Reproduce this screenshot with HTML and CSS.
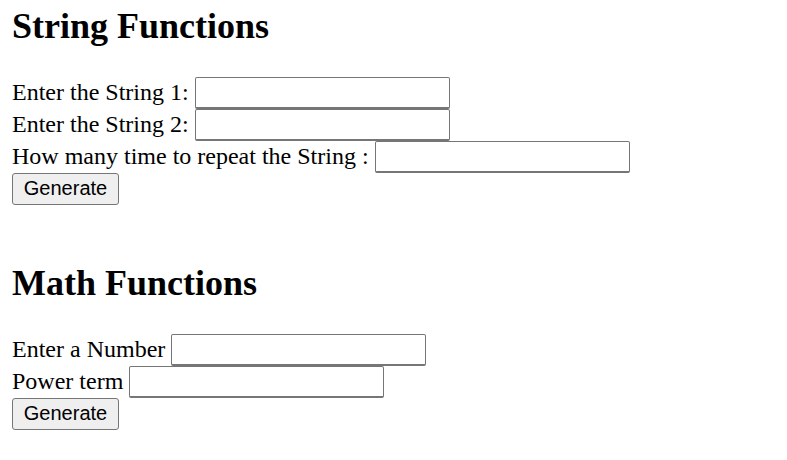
FILE: index.html
```html
<!DOCTYPE html>
<html>
<head>
<meta charset="utf-8">
<title>Functions</title>
<link rel="stylesheet" href="styles.css">
</head>
<body>
<div class="page">
  <h2 class="title first">String Functions</h2>
  <form class="form">
    Enter the String 1: <input class="field" type="text"><br>
    Enter the String 2: <input class="field" type="text"><br>
    How many time to repeat the String : <input class="field" type="text"><br>
    <button class="btn" type="button">Generate</button>
  </form>
  <br>
  <h2 class="title">Math Functions</h2>
  <form class="form">
    Enter a Number <input class="field" type="text"><br>
    Power term <input class="field" type="text"><br>
    <button class="btn" type="button">Generate</button>
  </form>
</div>
</body>
</html>
```
FILE: styles.css
```css
html, body {
  margin: 0;
  padding: 0;
  background: #ffffff;
}
.page {
  padding: 0 12px 12px;
  font-family: "Liberation Serif", "Times New Roman", serif;
  font-size: 24px;
  color: #000000;
}
.title {
  font-size: 36px;
  font-weight: bold;
  margin: 30px 0;
}
.title.first {
  margin-top: 5px;
}
.form {
  margin: 0;
}
.field {
  box-sizing: border-box;
  width: 255px;
  height: 32px;
  margin: 0;
  padding: 1px 3px;
  border: 1px solid #767676;
  border-bottom-width: 2px;
  border-radius: 2px;
  font-family: "Liberation Sans", Arial, sans-serif;
  font-size: 20px;
  background: #ffffff;
  vertical-align: 1px;
}
.btn {
  box-sizing: border-box;
  height: 32px;
  width: 107px;
  margin: 0;
  padding: 0 9px 2px;
  border: 1px solid #767676;
  border-radius: 3px;
  background: #efefef;
  font-family: "Liberation Sans", Arial, sans-serif;
  font-size: 20px;
  color: #000000;
}
```
